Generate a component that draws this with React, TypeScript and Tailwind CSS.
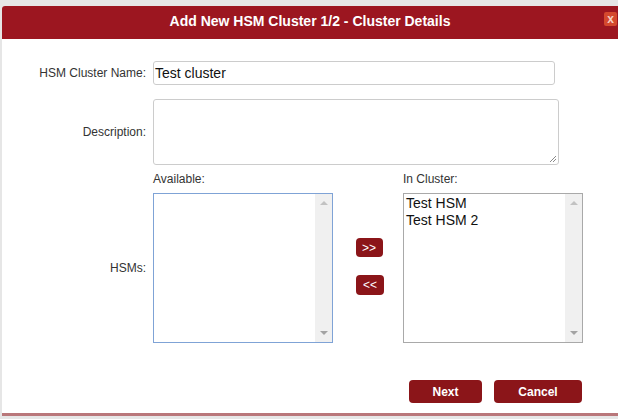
import { ReactNode } from "react";

const font = { fontFamily: '"Liberation Sans", Arial, sans-serif' };

// Fake native listbox with a classic grey scroll track
function ListBox({ items, focused }: { items: string[]; focused?: boolean }) {
  return (
    <div
      className={`flex h-[150px] w-[180px] border ${
        focused ? "border-[#7fa3d6]" : "border-[#a9a9a9]"
      } bg-white`}
    >
      <div className="flex-1 px-[2px] pt-[1px] text-[14px] leading-[17px] text-[#111]">
        {items.map((item) => (
          <div key={item}>{item}</div>
        ))}
      </div>
      <div className="flex w-[17px] flex-col items-center justify-between bg-[#f0f0f0] py-[7px]">
        <span className="h-0 w-0 border-x-[4px] border-b-[4px] border-x-transparent border-b-[#c2c2c2]" />
        <span className="h-0 w-0 border-x-[4px] border-t-[4px] border-x-transparent border-t-[#a3a3a3]" />
      </div>
    </div>
  );
}

function Label({ children, className = "" }: { children: ReactNode; className?: string }) {
  return (
    <div className={`w-[144px] shrink-0 text-right text-[12px] text-[#333] ${className}`}>
      {children}
    </div>
  );
}

export default function App() {
  return (
    <div className="h-[419px] w-[618px] overflow-hidden bg-[#e6e6e6]" style={font}>
      <div className="ml-[2px] mt-[6px] flex h-[410px] flex-col overflow-hidden rounded-tl-[3px] border-b-[3px] border-[#b9777a] bg-white">
        {/* Title bar */}
        <div className="relative flex h-[33px] shrink-0 items-center justify-center bg-[#9c1620] pb-[3px]">
          <span className="text-[14px] font-bold text-white">
            Add New HSM Cluster 1/2 - Cluster Details
          </span>
          <button className="absolute right-[1px] top-[6px] flex h-[14px] w-[13px] items-center justify-center rounded-[2px] bg-[#d4492e] text-[12px] font-bold leading-none text-[#f6cfc4]">
            x
          </button>
        </div>

        {/* Form */}
        <div className="flex flex-col pt-[22px]">
          <div className="flex items-center gap-[7px]">
            <Label>HSM Cluster Name:</Label>
            <div className="flex h-[24px] w-[402px] items-center rounded-[3px] border border-[#cccccc] px-[1px] text-[14px] text-[#111]">
              Test cluster
            </div>
          </div>

          <div className="mt-[14px] flex items-center gap-[7px]">
            <Label>Description:</Label>
            <div className="relative h-[66px] w-[406px] rounded-[3px] border border-[#cccccc]">
              <svg className="absolute bottom-[1px] right-[1px]" width="9" height="9" viewBox="0 0 9 9">
                <path d="M8 2 L2 8 M8 5 L5 8" stroke="#8a8a8a" strokeWidth="1" />
              </svg>
            </div>
          </div>

          <div className="mt-[5px] flex items-center gap-[7px]">
            <Label className="pt-[23px]">HSMs:</Label>
            <div className="flex items-end">
              <div className="flex flex-col">
                <span className="mb-[5px] text-[12px] text-[#333]">Available:</span>
                <ListBox items={[]} focused />
              </div>
              <div className="flex w-[70px] flex-col items-center gap-[18px] pb-[48px] pl-[2px]">
                <button className="h-[19px] w-[27px] rounded-[4px] bg-[#8b1519] text-[12px] leading-none text-white">
                  &gt;&gt;
                </button>
                <button className="ml-[2px] h-[20px] w-[28px] rounded-[4px] bg-[#8b1519] text-[12px] leading-none text-white">
                  &lt;&lt;
                </button>
              </div>
              <div className="flex flex-col">
                <span className="mb-[5px] text-[12px] text-[#333]">In Cluster:</span>
                <ListBox items={["Test HSM", "Test HSM 2"]} />
              </div>
            </div>
          </div>

          {/* Footer actions */}
          <div className="mt-[37px] flex gap-[12px] pl-[407px]">
            <button className="h-[23px] w-[73px] rounded-[4px] bg-[#8b1519] text-[12px] font-bold text-white">
              Next
            </button>
            <button className="h-[23px] w-[88px] rounded-[4px] bg-[#8b1519] text-[12px] font-bold text-white">
              Cancel
            </button>
          </div>
        </div>
      </div>
    </div>
  );
}
